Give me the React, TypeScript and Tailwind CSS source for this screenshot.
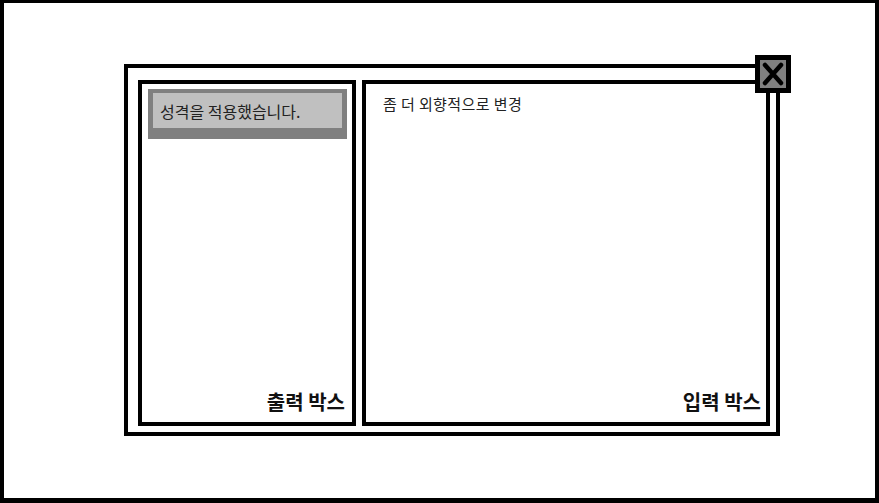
import React from 'react';

const font = { fontFamily: '"Noto Sans CJK KR", "Noto Sans", sans-serif' };

function CloseButton() {
  return (
    <button
      type="button"
      className="absolute top-[-13px] right-[-15px] w-[36px] h-[38px] border-[5px] border-black bg-[#808080] flex items-center justify-center p-0"
    >
      <svg width="26" height="28" viewBox="0 0 26 28">
        <path d="M5 5 L21 23 M21 5 L5 23" stroke="#000" strokeWidth="4.5" strokeLinecap="round" fill="none" />
      </svg>
    </button>
  );
}

export default function App() {
  return (
    <div
      className="w-[879px] h-[503px] bg-white border-t-[3px] border-x-4 border-b-[5px] border-black pl-[120px] pt-[61px]"
      style={font}
    >
      {/* dialog */}
      <div className="relative w-[656px] h-[372px] border-4 border-black bg-white pl-[10px] pr-[6px] pt-[12px] pb-[6px] flex gap-[6px]">
        <CloseButton />

        {/* output box */}
        <div className="w-[218px] h-full border-4 border-black flex flex-col pl-[6px] pr-[5px] pt-[5px]">
          <div className="bg-[#808080] pt-[4px] px-[5px] pb-[11px]">
            <div className="bg-[#c0c0c0] h-[35px] flex items-center px-[7px] text-[16px] text-[#222]">
              성격을 적용했습니다.
            </div>
          </div>
          <div className="flex-1" />
          <div className="text-right text-[20px] font-bold leading-[26px] pb-[7px] pr-[2px] text-[#111]">출력 박스</div>
        </div>

        {/* input box */}
        <div className="flex-1 h-full border-4 border-black flex flex-col">
          <textarea
            defaultValue="좀 더 외향적으로 변경"
            className="flex-1 resize-none outline-none pl-[17px] pt-[9px] text-[15px] tracking-[0.4px] leading-[22px] text-[#222] bg-transparent"
            style={font}
          />
          <div className="text-right text-[20px] font-bold leading-[26px] pb-[7px] pr-[5px] text-[#111]">입력 박스</div>
        </div>
      </div>
    </div>
  );
}
